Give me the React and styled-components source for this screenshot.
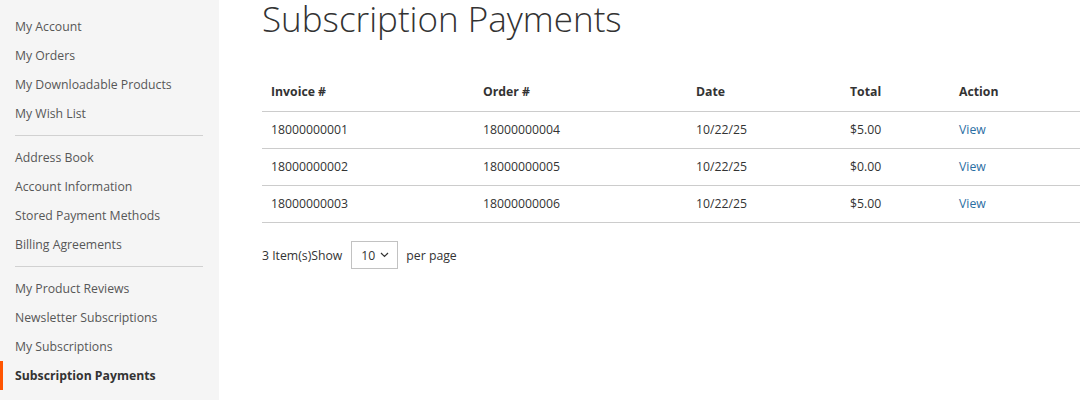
import styled, { createGlobalStyle } from "styled-components";

const GlobalStyle = createGlobalStyle`
  html, body {
    margin: 0;
    padding: 0;
    background: #fff;
  }
  body {
    font-family: "Open Sans", "Liberation Sans", sans-serif;
    font-size: 12.25px;
    color: #333;
  }
`;

const navGroups = [
  ["My Account", "My Orders", "My Downloadable Products", "My Wish List"],
  ["Address Book", "Account Information", "Stored Payment Methods", "Billing Agreements"],
  ["My Product Reviews", "Newsletter Subscriptions", "My Subscriptions", "Subscription Payments"],
];

const rows = [
  { invoice: "18000000001", order: "18000000004", date: "10/22/25", total: "$5.00" },
  { invoice: "18000000002", order: "18000000005", date: "10/22/25", total: "$0.00" },
  { invoice: "18000000003", order: "18000000006", date: "10/22/25", total: "$5.00" },
];

const Page = styled.div`
  display: flex;
  width: 1080px;
  height: 400px;
  overflow: hidden;
`;

const Sidebar = styled.nav`
  flex: 0 0 219px;
  background: #f5f5f5;
  padding-top: 12px;
  box-sizing: border-box;
`;

const NavList = styled.ul`
  list-style: none;
  margin: 0;
  padding: 0;
`;

const NavItem = styled.li`
  display: block;
  height: 29px;
  line-height: 29px;
  font-size: 12.25px;
  color: ${({ $active }) => ($active ? "#333" : "#575757")};
  font-weight: ${({ $active }) => ($active ? 700 : 400)};
  border-left: ${({ $active }) => ($active ? "3px solid #ff5501" : "none")};
  padding-left: ${({ $active }) => ($active ? "12px" : "15px")};
  white-space: nowrap;
`;

const Delimiter = styled.li`
  height: 1px;
  background: #d1d1d1;
  margin: 7px 16px 7px 15px;
`;

const Main = styled.main`
  flex: 1;
  padding-left: 43px;
  overflow: hidden;
`;

const Title = styled.h1`
  margin: 0;
  font-size: 35px;
  line-height: 38px;
  font-weight: 300;
  color: #333;
  white-space: nowrap;
`;

const Table = styled.table`
  margin-top: 31px;
  width: 860px;
  border-collapse: collapse;
  table-layout: fixed;
`;

const Th = styled.th`
  box-sizing: border-box;
  text-align: left;
  font-weight: 700;
  font-size: 12.25px;
  line-height: 20px;
  padding: 13px 9px 9px;
  color: #333;
  border-bottom: 1px solid #ccc;
  width: ${({ $w }) => ($w ? `${$w}px` : "auto")};
`;

const Td = styled.td`
  font-size: 12.25px;
  line-height: 20px;
  padding: 8px 9px 8px;
  color: #333;
  border-bottom: 1px solid #ccc;
`;

const Link = styled.a`
  color: #2a6ea3;
  text-decoration: none;
`;

const Toolbar = styled.div`
  display: flex;
  align-items: center;
  margin-top: 18px;
  height: 28px;
  font-size: 12.25px;
  color: #333;
`;

const Select = styled.div`
  display: flex;
  align-items: center;
  gap: 5px;
  box-sizing: border-box;
  width: 47px;
  height: 28px;
  margin: 0 8px 0 9px;
  padding-left: 9px;
  border: 1px solid #c2c2c2;
  background: #fff;
`;

const Chevron = () => (
  <svg width="9" height="6" viewBox="0 0 9 6" fill="none">
    <path d="M1 1l3.5 3.5L8 1" stroke="#333" strokeWidth="1.2" />
  </svg>
);

const columns = [
  { label: "Invoice #", w: 212 },
  { label: "Order #", w: 213 },
  { label: "Date", w: 154 },
  { label: "Total", w: 109 },
  { label: "Action" },
];

export default function App() {
  return (
    <>
      <GlobalStyle />
      <Page>
        <Sidebar>
          <NavList>
            {navGroups.map((group, gi) => [
              ...group.map((label) => (
                <NavItem key={label} $active={label === "Subscription Payments"}>
                  {label}
                </NavItem>
              )),
              gi < navGroups.length - 1 ? <Delimiter key={`d${gi}`} /> : null,
            ])}
          </NavList>
        </Sidebar>
        <Main>
          <Title>Subscription Payments</Title>
          <Table>
            <thead>
              <tr>
                {columns.map((c) => (
                  <Th key={c.label} $w={c.w}>
                    {c.label}
                  </Th>
                ))}
              </tr>
            </thead>
            <tbody>
              {rows.map((r) => (
                <tr key={r.invoice}>
                  <Td>{r.invoice}</Td>
                  <Td>{r.order}</Td>
                  <Td>{r.date}</Td>
                  <Td>{r.total}</Td>
                  <Td>
                    <Link href="#">View</Link>
                  </Td>
                </tr>
              ))}
            </tbody>
          </Table>
          <Toolbar>
            <span>3 Item(s)Show</span>
            <Select>
              <span>10</span>
              <Chevron />
            </Select>
            <span>per page</span>
          </Toolbar>
        </Main>
      </Page>
    </>
  );
}
